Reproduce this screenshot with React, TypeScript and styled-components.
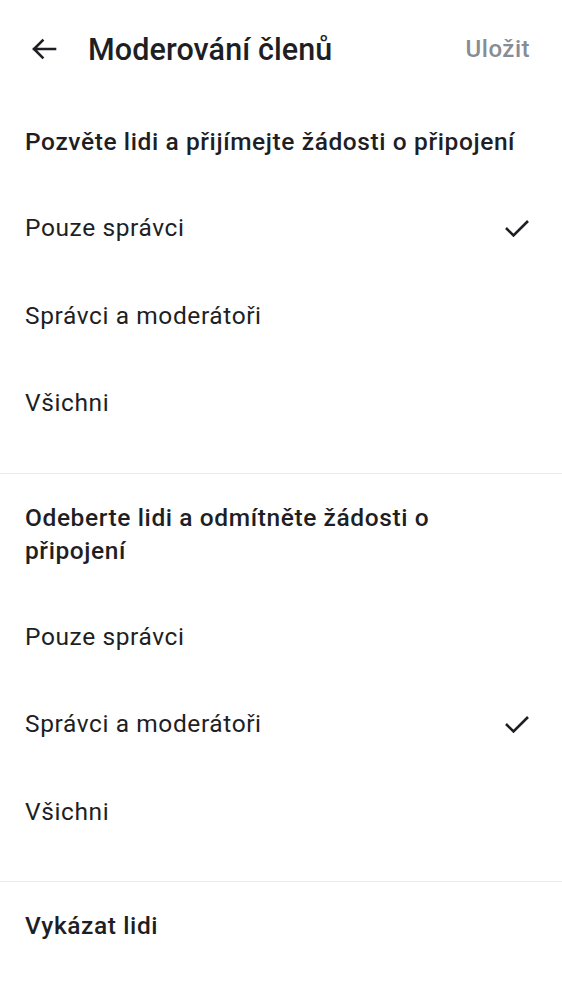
import React from "react";
import styled, { createGlobalStyle } from "styled-components";

const GlobalStyle = createGlobalStyle`
  body {
    margin: 0;
    background: #ffffff;
    font-family: Roboto, "Noto Sans", "Liberation Sans", sans-serif;
    color: #1e1f24;
  }
`;

const Page = styled.div`
  width: 562px;
  height: 1000px;
  overflow: hidden;
  background: #ffffff;
`;

const TopBar = styled.header`
  height: 98px;
  display: flex;
  align-items: center;
  padding: 0 32px 0 30px;
`;

const BackButton = styled.button`
  border: 0;
  background: none;
  padding: 0;
  width: 28px;
  height: 28px;
  display: flex;
  align-items: center;
  justify-content: center;
  color: #1e1f24;
`;

const Title = styled.h1`
  flex: 1;
  margin: 0 0 0 30px;
  font-size: 30.5px;
  font-weight: 500;
  letter-spacing: 0.1px;
`;

const SaveButton = styled.button`
  border: 0;
  background: none;
  padding: 0;
  font-family: inherit;
  font-size: 24px;
  font-weight: 500;
  color: #878c95;
  letter-spacing: 0.5px;
`;

const Section = styled.section<{ $last?: boolean }>`
  padding: 27px 0 26px;
  border-bottom: ${(p) => (p.$last ? "none" : "1px solid #e8eaee")};
`;

const SectionTitle = styled.h2`
  margin: 0 0 26px;
  padding: 0 36px 0 25px;
  font-size: 24.5px;
  line-height: 33px;
  font-weight: 500;
  letter-spacing: 0.6px;
`;

const Option = styled.div`
  height: 87.5px;
  display: flex;
  align-items: center;
  justify-content: space-between;
  padding: 0 32px 0 25px;
  font-size: 24.5px;
  letter-spacing: 0.6px;
`;

const ArrowIcon = () => (
  <svg width="26" height="22" viewBox="0 0 26 22" fill="none">
    <path
      d="M24 11H3M11.5 2.5L3 11l8.5 8.5"
      stroke="currentColor"
      strokeWidth="2.6"
      strokeLinecap="square"
    />
  </svg>
);

const CheckIcon = () => (
  <svg width="26" height="20" viewBox="0 0 26 20" fill="none">
    <path d="M2 10l7.5 7.5L24 3" stroke="#1e1f24" strokeWidth="2.6" />
  </svg>
);

const levels = ["Pouze správci", "Správci a moderátoři", "Všichni"];

const sections = [
  { title: "Pozvěte lidi a přijímejte žádosti o připojení", selected: 0 },
  { title: "Odeberte lidi a odmítněte žádosti o připojení", selected: 1 },
  { title: "Vykázat lidi", selected: 1 },
];

export default function App() {
  return (
    <Page>
      <GlobalStyle />
      <TopBar>
        <BackButton aria-label="Zpět">
          <ArrowIcon />
        </BackButton>
        <Title>Moderování členů</Title>
        <SaveButton>Uložit</SaveButton>
      </TopBar>
      {sections.map((s, i) => (
        <Section key={s.title} $last={i === sections.length - 1}>
          <SectionTitle>{s.title}</SectionTitle>
          {levels.map((l, j) => (
            <Option key={l}>
              <span>{l}</span>
              {s.selected === j && <CheckIcon />}
            </Option>
          ))}
        </Section>
      ))}
    </Page>
  );
}
